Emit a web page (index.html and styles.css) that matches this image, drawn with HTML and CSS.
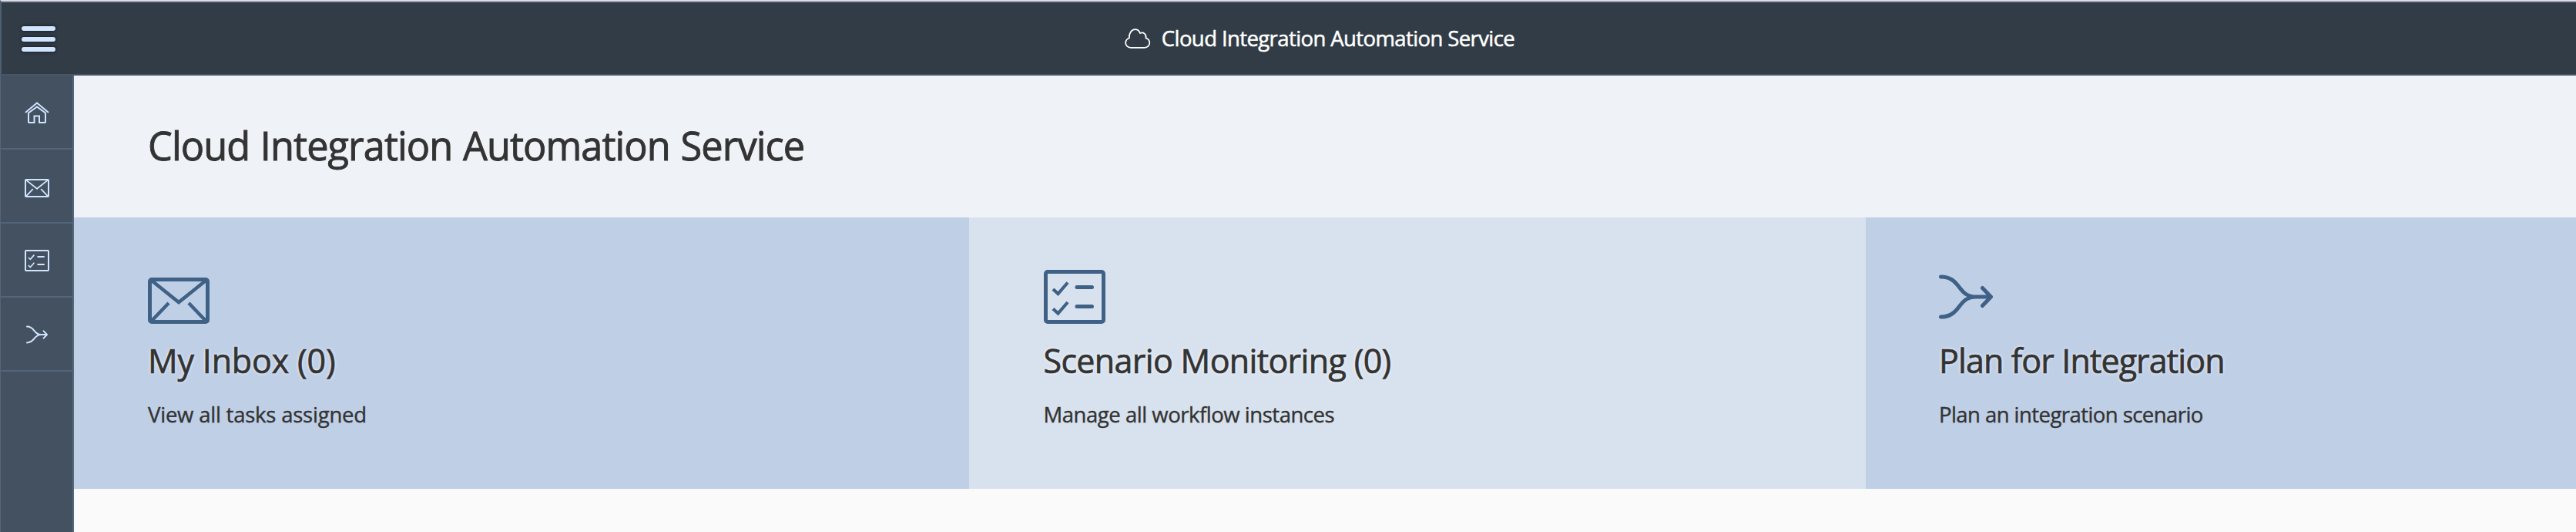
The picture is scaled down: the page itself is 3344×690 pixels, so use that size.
FILE: index.html
```html
<!DOCTYPE html>
<html lang="en">
<head>
<meta charset="utf-8">
<title>Cloud Integration Automation Service</title>
<link rel="stylesheet" href="styles.css">
</head>
<body>
<svg class="defs" width="0" height="0" aria-hidden="true">
  <symbol id="i-mail" viewBox="0 0 80 60">
    <rect x="2.5" y="2.5" width="75" height="55" rx="2.5"/>
    <path stroke-width="4.500" d="M5 4L40 32L75 4M5 56L27 33M75 56L53 33"/>
  </symbol>
  <symbol id="i-list" viewBox="0 0 80 70">
    <rect x="2.500" y="2.500" width="75" height="65" rx="2.500"/>
    <path stroke-width="4.200" d="M12 25L18.500 31L31 16.500M12 50.500L18.500 56.500L31 42"/>
    <path stroke-linecap="round" d="M43 22.500H62.500M43 47.500H62.500"/>
  </symbol>
  <symbol id="i-merge" viewBox="0 0 70 60">
    <path stroke-linecap="round" stroke-linejoin="round" d="M2.500 4C14 4 20 9 26 17C32 25 37 30 48 30H66M2.500 56C14 56 20 51 26 43C32 35 37 30 48 30M56.500 18.500L67.500 30L56.500 41.500"/>
  </symbol>
</svg>
<header class="shell">
  <button class="menu" aria-label="Menu"><span></span><span></span><span></span></button>
  <div class="brand">
    <svg class="cloud" viewBox="0 0 34 26"><path d="M8 24.800C3.800 24.800 1.200 22 1.200 18.500C1.200 15.700 3 13.500 5.800 12.500C5.300 6 9 1.200 13.500 1.200C16.500 1.200 18.800 3 20 6C24.500 4.200 28.200 7.500 27.600 12.300C30.500 13.300 32.300 15.800 32.300 18.500C32.300 22 29.500 24.800 25.800 24.800Z"/></svg>
    <span class="brand-name">Cloud Integration Automation Service</span>
  </div>
</header>
<div class="body">
  <nav class="side">
    <a class="side-item"><svg class="ico home" viewBox="0 0 32 28"><path d="M1 14L16 1.500L31 14"/><path d="M5 14.500V26.300Q5 27 5.700 27H12.500V18.500H19V27H26.300Q27 27 27 26.300V14.500L16 6.500Z"/></svg></a>
    <a class="side-item"><svg class="ico mail"><use href="#i-mail"/></svg></a>
    <a class="side-item"><svg class="ico list"><use href="#i-list"/></svg></a>
    <a class="side-item"><svg class="ico merge"><use href="#i-merge"/></svg></a>
  </nav>
  <main class="main">
    <div class="page-head"><h1>Cloud Integration Automation Service</h1></div>
    <div class="tiles">
      <section class="tile">
        <div class="tile-icon"><svg class="big mail"><use href="#i-mail"/></svg></div>
        <h2 class="t1">My Inbox (0)</h2><p class="s1">View all tasks assigned</p>
      </section>
      <section class="tile alt">
        <div class="tile-icon"><svg class="big list"><use href="#i-list"/></svg></div>
        <h2 class="t2">Scenario Monitoring (0)</h2><p class="s2">Manage all workflow instances</p>
      </section>
      <section class="tile last">
        <div class="tile-icon"><svg class="big merge"><use href="#i-merge"/></svg></div>
        <h2 class="t3">Plan for Integration</h2><p class="s3">Plan an integration scenario</p>
      </section>
    </div>
  </main>
</div>
</body>
</html>
```
FILE: styles.css
```css
* { box-sizing: border-box; }
body { margin: 0; height: 690px; overflow: hidden; display: flex; flex-direction: column; background: #fafafa; color: #333; font-family: "Open Sans", "Noto Sans", sans-serif; }
.defs { display: block; position: absolute; }
svg { fill: none; flex: none; display: block; }
h1, h2, p { margin: 0; white-space: nowrap; width: max-content; }
.shell { flex: none; height: 98px; border-top: 2px solid #dcdce6; border-bottom: 2px solid #475566; border-left: 2px solid #4f5f70; background: #323c46; box-shadow: inset 0 2px #475566; display: grid; grid-template-columns: 1fr auto 1fr; align-items: center; }
.menu { display: flex; flex-direction: column; gap: 7.700px; width: 44px; margin: 3px 0 0 26px; padding: 0; border: 0; background: none; }
.menu span { height: 6px; border-radius: 3px; background: #d0e5ff; box-shadow: 0 0 4px rgba(0,0,0,.7); }
.brand { display: flex; align-items: center; gap: 14px; margin-left: 80px; }
.cloud { width: 34px; height: 26px; margin-top: 2px; stroke: #fff; stroke-width: 1.800; }
.brand-name { color: #fff; font-size: 27.500px; line-height: 38px; padding-top: 1px; letter-spacing: -.6px; -webkit-text-stroke: .5px #fff; }
.body { flex: 1; display: flex; min-height: 0; }
.side { flex: none; width: 96px; background: #445160; border-left: 1px solid #53657a; border-right: 2px solid #53687e; }
.side-item { height: 96px; padding: 2px 0 0 1px; border-bottom: 2px solid #53657a; display: flex; align-items: center; justify-content: center; }
.ico { stroke: #d0e5ff; stroke-width: 2; }
.ico.home { width: 32px; height: 28px; }
.ico.mail { width: 32px; height: 24px; margin-top: 4px; stroke-width: 5; }
.ico.list { width: 32px; height: 28px; stroke-width: 5; }
.ico.merge { width: 28px; height: 24px; stroke-width: 5; }
.main { flex: 1; min-width: 0; overflow: hidden; }
.page-head { height: 184px; padding: 55px 0 0 96px; background: #eff3f8; }
h1 { font-size: 50.500px; line-height: 72px; font-weight: 400; letter-spacing: -.93px; word-spacing: 1.500px; -webkit-text-stroke: .9px #333; }
.tiles { display: grid; grid-template-columns: 1162px 1164px 1163px; height: 352px; }
.tile { background: #bfcfe6; padding: 68px 0 0 96px; }
.tile.alt { background: #d8e2ee; padding-left: 96.500px; }
.tile.last { padding-left: 95px; }
.tile-icon { height: 70px; display: flex; align-items: flex-end; }
.big { stroke: #3f6186; stroke-width: 5; }
.big.mail { width: 80px; height: 60px; }
.big.list { width: 80px; height: 70px; }
.big.merge { width: 70px; height: 60px; margin-bottom: 5px; }
h2 { margin-top: 18px; font-size: 43px; line-height: 60px; font-weight: 400; -webkit-text-stroke: .7px #333; text-shadow: 0 0 4px #fff; }
.tile p { margin-top: 21px; font-size: 27.500px; line-height: 38px; -webkit-text-stroke: .4px #333; }
.t1 { letter-spacing: -.18px; }
.t2 { letter-spacing: -.66px; }
.t3 { letter-spacing: -.88px; }
.s1 { letter-spacing: -.22px; }
.s2 { letter-spacing: -.47px; }
.s3 { letter-spacing: -.56px; }
```
